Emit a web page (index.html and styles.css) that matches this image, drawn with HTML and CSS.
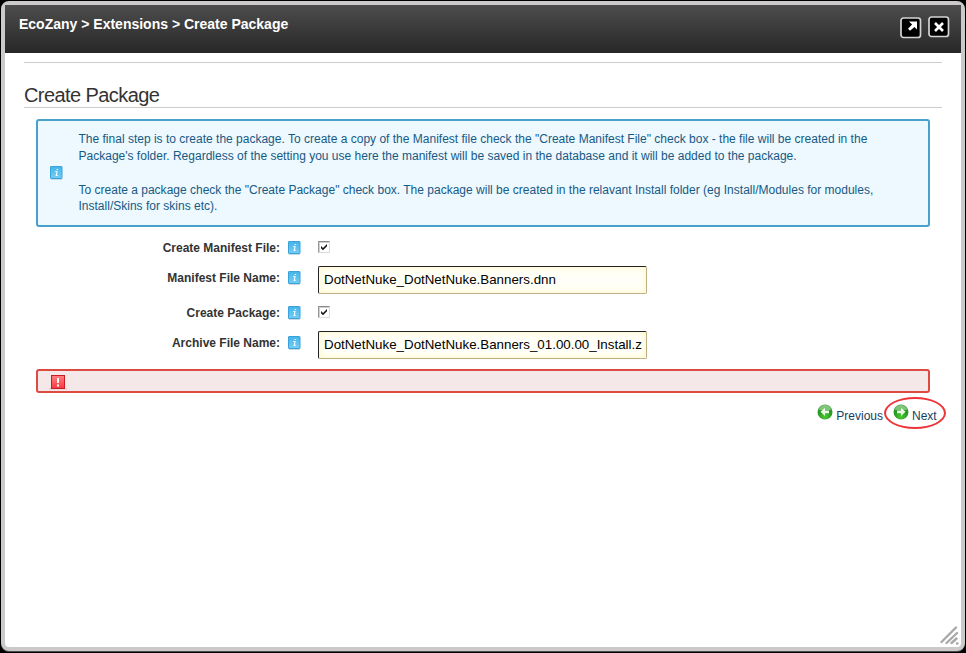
FILE: index.html
```html
<!DOCTYPE html>
<html lang="en">
<head>
<meta charset="utf-8">
<title>Create Package</title>
<link rel="stylesheet" href="styles.css">
</head>
<body>
<svg class="defs" aria-hidden="true">
  <defs>
    <linearGradient id="blue" x1="0" y1="0" x2="0" y2="1"><stop offset="0" stop-color="#45b5e9"/><stop offset="1" stop-color="#75cdf5"/></linearGradient>
    <linearGradient id="red" x1="0" y1="0" x2="0" y2="1"><stop offset="0" stop-color="#ff8080"/><stop offset="1" stop-color="#f83a42"/></linearGradient>
    <radialGradient id="green" cx=".5" cy=".8" r=".75"><stop offset="0" stop-color="#4fc936"/><stop offset=".6" stop-color="#259a20"/><stop offset="1" stop-color="#3d9a3b"/></radialGradient>
    <symbol id="info" viewBox="0 0 14 15">
      <path d="M1 13.5h11" stroke="#cbdbe2"/>
      <rect x=".5" y=".5" width="11.5" height="12" rx=".5" fill="url(#blue)" stroke="#3aa2d8"/>
      <path d="M6.600 3.500h1.500M5.200 5.500h1.800L6.200 9.400h1.500" fill="none" stroke="#f4fbff" stroke-width="1.150"/>
    </symbol>
  </defs>
</svg>
<div class="dialog">
  <header class="titlebar">
    <h1 class="crumbs">EcoZany &gt; Extensions &gt; Create Package</h1>
    <div class="controls">
      <svg class="max" width="22" height="22" viewBox="0 0 22 22"><rect x="1" y="1" width="19.5" height="19.5" rx="2.5" fill="#000" stroke="#d4d4d4" stroke-width="1.7"/><path d="M9 4.500h8V12.500l-2.500-2.500-4.500 3.800-2-2 4.100-4.200z" fill="#fff"/></svg>
      <svg width="22" height="22" viewBox="0 0 22 22"><rect x="1" y="1" width="19.5" height="19.5" rx="2.5" fill="#000" stroke="#d4d4d4" stroke-width="1.7"/><path d="M7 7l8 8M15 7l-8 8" stroke="#fff" stroke-width="2.6"/></svg>
    </div>
  </header>
  <main class="content">
    <h2 class="heading">Create Package</h2>
    <section class="notice">
      <svg class="icon" width="14" height="15"><use href="#info"/></svg>
      <div class="copy">
        <p>The final step is to create the package. To create a copy of the Manifest file check the "Create Manifest File" check box - the file will be created in the<br>Package's folder. Regardless of the setting you use here the manifest will be saved in the database and it will be added to the package.</p>
        <p>To create a package check the "Create Package" check box. The package will be created in the relavant Install folder (eg Install/Modules for modules,<br>Install/Skins for skins etc).</p>
      </div>
    </section>
    <form class="form">
      <div class="row check"><label>Create Manifest File:</label><svg width="14" height="15"><use href="#info"/></svg><span class="box"><svg width="12" height="12" viewBox="0 0 12 12"><path d="M3 5l2 2 4-4v2.200l-4 4-2-2z" fill="#15151f"/></svg></span></div>
      <div class="row text"><label>Manifest File Name:</label><svg width="14" height="15"><use href="#info"/></svg><div class="field">DotNetNuke_DotNetNuke.Banners.dnn</div></div>
      <div class="row check"><label>Create Package:</label><svg width="14" height="15"><use href="#info"/></svg><span class="box"><svg width="12" height="12" viewBox="0 0 12 12"><path d="M3 5l2 2 4-4v2.200l-4 4-2-2z" fill="#15151f"/></svg></span></div>
      <div class="row text"><label>Archive File Name:</label><svg width="14" height="15"><use href="#info"/></svg><div class="field">DotNetNuke_DotNetNuke.Banners_01.00.00_Install.z</div></div>
    </form>
    <div class="error"><svg width="18" height="15" viewBox="0 0 18 15"><path d="M0 13.8h18" stroke="#cfc1c1"/><rect x="2.5" y=".5" width="13" height="13" fill="url(#red)" stroke="#c91c24"/><path d="M9 3v5M9 9.5v2" stroke="#fff" stroke-width="2"/></svg></div>
    <nav class="nav">
      <a class="prev"><svg width="16" height="16" viewBox="0 0 16 16"><circle cx="8" cy="8" r="7.5" fill="url(#green)"/><path d="M2 6a6 5 0 0 1 12 0" fill="#b6dfad" opacity=".6"/><path d="M3.5 7.8L8 3.8v2.6h4v2.9H8V12z" fill="#eaf9e4"/></svg><span>Previous</span></a>
      <a class="next"><svg width="16" height="16" viewBox="0 0 16 16"><circle cx="8" cy="8" r="7.5" fill="url(#green)"/><path d="M2 6a6 5 0 0 1 12 0" fill="#b6dfad" opacity=".6"/><path d="M12.5 7.8L8 3.8v2.6H4v2.9h4V12z" fill="#eaf9e4"/></svg><span>Next</span></a>
    </nav>
  </main>
  <svg class="grip" width="20" height="20" viewBox="0 0 20 20"><path d="M1.500 16L16 1.500M6.500 17L17 7M11.500 17l5-4.500M17 17.500h.5" stroke="#a9a9a9" stroke-width="2.4" stroke-linecap="round"/></svg>
</div>
</body>
</html>
```
FILE: styles.css
```css
* { box-sizing: border-box; }
body { margin: 0; height: 653px; padding: 1px 1px 2px; background: #000; overflow: hidden; font: 12px/17px "Liberation Sans", Arial, sans-serif; color: #222; }
h1, h2, p { margin: 0; }
svg { display: block; flex: none; }
.defs { position: absolute; width: 0; height: 0; }
.dialog { position: relative; height: 650px; border: 4px solid #cbc9ca; border-radius: 8px; background: #fff; box-shadow: 0 1px 0 #4a4a4a; }
.titlebar { height: 48px; display: flex; justify-content: space-between; padding: 11px 11px 0 14px; background: linear-gradient(#4d4d4d, #272727); }
.crumbs { font-size: 14px; line-height: 17px; color: #fff; white-space: nowrap; }
.controls { display: flex; gap: 6px; }
.max { margin-top: 1px; }
.content { padding: 9px 19px 0; }
.heading { height: 46px; padding-top: 20px; border-top: 1px solid #ccc; border-bottom: 1px solid #ccc; font-size: 20px; font-weight: 400; line-height: 24px; letter-spacing: -.58px; white-space: nowrap; color: #333; }
.notice { height: 108px; margin: 11px 12px 0; display: flex; align-items: center; border: 2px solid #47a1cb; border-radius: 3px; background: #edf8ff; color: #165a85; padding-left: 12px; }
.notice .icon { margin-right: 14.5px; }
.copy { height: 84px; line-height: 16.8px; letter-spacing: .005px; white-space: nowrap; }
.copy p + p { margin-top: 17px; }
.form { padding: 12px 0 0 12px; }
.row { display: flex; align-items: flex-start; }
.row label { width: 244px; height: 17px; text-align: right; font-weight: 700; white-space: nowrap; color: #333; margin-right: 8px; }
.row > svg { margin: 2px 16px 0 0; }
.check { height: 27px; }
.check label { padding-top: 1px; }
.text { height: 38px; }
.check + .text label { padding-top: 4px; }
.check + .text > svg { margin-top: 5px; }
.box { width: 12px; height: 12px; margin-top: 2px; border: 1px solid #dcdcdc; border-top-color: #888; border-left-color: #999; box-shadow: inset 1px 1px #d0d0d0; }
.box svg { margin: -1px; }
.field { width: 329px; height: 28px; border: 1px solid #bfb083; border-top-color: #222; border-left-color: #222; border-radius: 2px; background: #fffff7; box-shadow: inset 0 0 6px 1px #fff6ce; padding: 5px 5px; font-size: 13.333px; line-height: 16px; color: #000; white-space: nowrap; overflow: hidden; }
.error { height: 24px; margin: 0 12px; padding: 4px 0 0 11px; border: 2px solid #dd4a42; border-radius: 3px; background: #f5e8e8; }
.nav { display: flex; justify-content: flex-end; margin-top: 3px; color: #143e62; }
.nav a { display: flex; height: 32px; }
.nav svg { margin-top: 8px; }
.nav span { margin: 12px 0 0 3px; white-space: nowrap; }
.next { margin: 1px -4px 0 1px; width: 62px; border: 2px solid #ee3438; border-radius: 50%; padding-left: 7px; }
.next svg { margin-top: 5px; }
.nav .next span { margin-top: 9px; }
.grip { position: absolute; right: 1px; bottom: 1px; }
```
